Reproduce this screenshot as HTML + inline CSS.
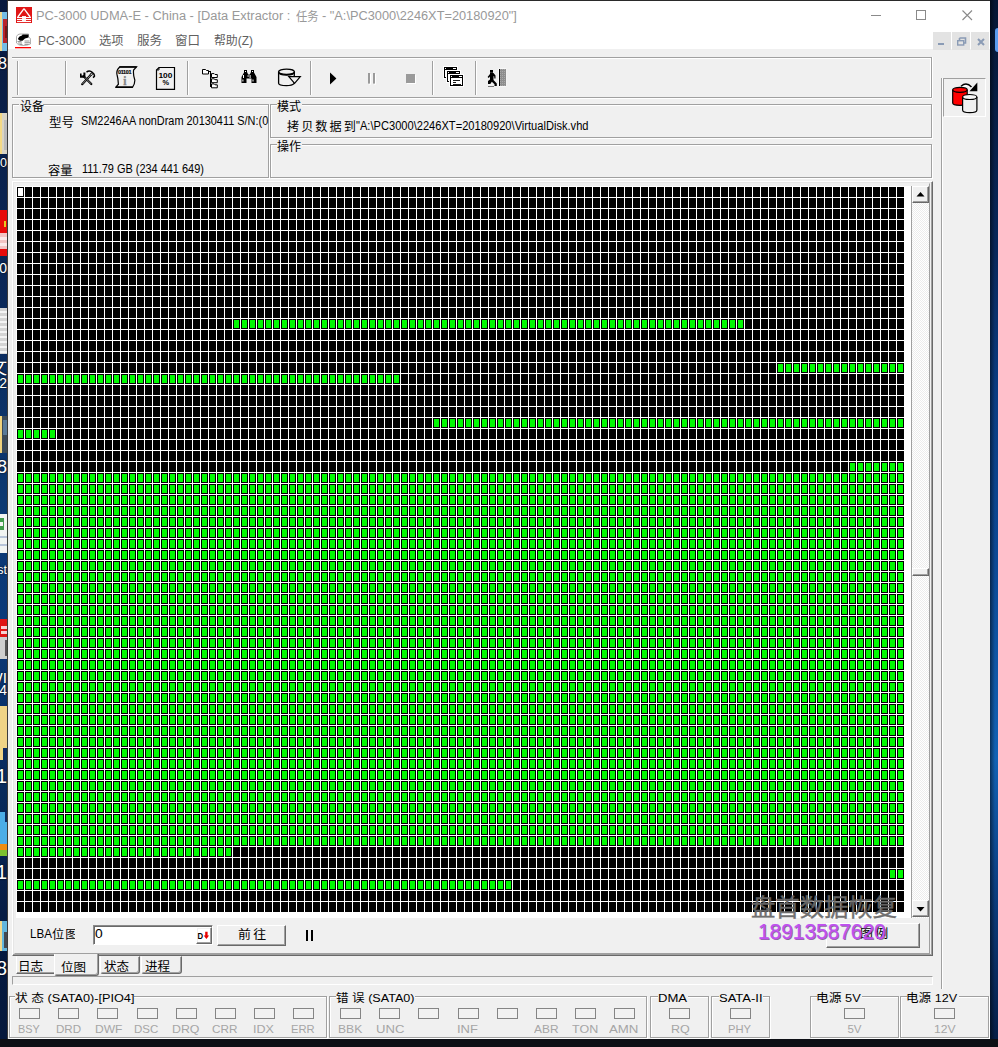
<!DOCTYPE html>
<html lang="zh"><head><meta charset="utf-8"><title>PC-3000 UDMA-E - China</title>
<style>
*{box-sizing:border-box;margin:0;padding:0}
html,body{width:998px;height:1047px;overflow:hidden}
body{position:relative;background:#0a2250;font-family:"Liberation Sans","Noto Sans CJK SC",sans-serif;font-size:12px}
.abs,.t,.ind,.gb,.sep,.ico{position:absolute}
.t{white-space:nowrap;transform-origin:left center;display:block}
#task{left:0;top:1039px;width:998px;height:8px;background:#0d0f15}
#win{left:7px;top:0;width:983px;height:1039px;background:#f0f0f0;border-left:1px solid #3c3c3c;border-top:1px solid #2a2a2a}
#title{left:8px;top:1px;width:982px;height:29px;background:#fff}
#menu{left:8px;top:30px;width:982px;height:19px;background:#fff}
.mdi{top:32px;width:18px;height:18px;background:#e3e3e3}
/* etched box */
.gb{border:1px solid #a0a0a0;box-shadow:inset 1px 1px 0 #fff,1px 1px 0 #fff}
.gbl{position:absolute;background:#f0f0f0;height:3px;top:-1px}
.sep{width:2px;top:61px;height:34px;border-left:1px solid #a0a0a0;border-right:1px solid #fff}
.ind{top:1008px;width:21px;height:11px;border:1px solid #858585;background:#f2f2f2}
.btn{border:1px solid;border-color:#fff #696969 #696969 #fff;box-shadow:inset -1px -1px 0 #a0a0a0,inset 1px 1px 0 #f0f0f0;background:#f0f0f0}
.tab{border:1px solid;border-color:transparent #696969 #696969 #fff;border-radius:0 0 3px 3px;box-shadow:inset -1px -1px 0 #a0a0a0;background:#f0f0f0}
.tab.sel{border-top:0}
.dl{color:#fff;white-space:nowrap;font-family:"Liberation Sans","Noto Sans CJK SC",sans-serif;text-shadow:0 0 2px #000}

</style></head>
<body>
<div class="abs" id="task"></div>
<!-- desktop fragments left -->
<div class="abs" style="left:0;top:0;width:8px;height:1039px;background:linear-gradient(180deg,#08193e 0,#0b2858 28%,#0c3872 48%,#0b3a7a 60%,#082a5c 76%,#061c44 88%,#05183c 100%)"></div>
<div class="abs" style="left:0px;top:12px;width:8px;height:39px;background:#74bde6"></div>
<div class="abs" style="left:0px;top:12px;width:2px;height:39px;background:#f2d98c"></div>
<div class="abs" style="left:3px;top:19px;width:5px;height:24px;background:#b8252b"></div>
<div class="abs" style="left:5px;top:26px;width:3px;height:12px;background:#7a1515"></div>
<span class="abs dl" style="right:991px;top:55px;height:18px;line-height:18px;font-size:16.7px">8</span>
<div class="abs" style="left:0px;top:113px;width:8px;height:41px;background:#d9d4c4"></div>
<div class="abs" style="left:0px;top:113px;width:2px;height:41px;background:#f4d985"></div>
<div class="abs" style="left:4px;top:120px;width:3px;height:30px;background:#b9b9b9"></div>
<span class="abs dl" style="right:991px;top:156px;height:15px;line-height:15px;font-size:12.5px">30</span>
<div class="abs" style="left:0px;top:210px;width:8px;height:46px;background:#e60a0a"></div>
<div class="abs" style="left:4px;top:221px;width:2px;height:6px;background:#e8c820"></div>
<div class="abs" style="left:0px;top:233px;width:8px;height:16px;background:#f3c4c4"></div>
<div class="abs" style="left:0px;top:237px;width:8px;height:3px;background:#fbeaea"></div>
<div class="abs" style="left:0px;top:243px;width:8px;height:3px;background:#fbeaea"></div>
<span class="abs dl" style="right:991px;top:260px;height:16px;line-height:16px;font-size:13.9px">00</span>
<div class="abs" style="left:0px;top:308px;width:8px;height:46px;background:#d4d4d4"></div>
<div class="abs" style="left:0px;top:311px;width:8px;height:2px;background:#f4f4f4"></div>
<div class="abs" style="left:0px;top:316px;width:8px;height:2px;background:#f4f4f4"></div>
<div class="abs" style="left:0px;top:321px;width:8px;height:2px;background:#f4f4f4"></div>
<div class="abs" style="left:0px;top:326px;width:8px;height:2px;background:#f4f4f4"></div>
<div class="abs" style="left:0px;top:331px;width:8px;height:2px;background:#f4f4f4"></div>
<div class="abs" style="left:0px;top:336px;width:8px;height:2px;background:#f4f4f4"></div>
<div class="abs" style="left:0px;top:341px;width:8px;height:2px;background:#f4f4f4"></div>
<div class="abs" style="left:0px;top:346px;width:8px;height:2px;background:#f4f4f4"></div>
<div class="abs" style="left:0px;top:351px;width:8px;height:2px;background:#f4f4f4"></div>
<span class="abs dl" style="right:991px;top:359px;height:19px;line-height:19px;font-size:18.1px">文</span>
<span class="abs dl" style="right:991px;top:375px;height:16px;line-height:16px;font-size:13.9px">(2</span>
<div class="abs" style="left:0px;top:416px;width:8px;height:37px;background:#3c4a58"></div>
<div class="abs" style="left:0px;top:416px;width:2px;height:37px;background:#f0d27c"></div>
<div class="abs" style="left:3px;top:420px;width:5px;height:15px;background:#5a7a98"></div>
<span class="abs dl" style="right:991px;top:458px;height:19px;line-height:19px;font-size:18.1px">8</span>
<div class="abs" style="left:0px;top:514px;width:8px;height:39px;background:#f2f4f2"></div>
<div class="abs" style="left:0px;top:518px;width:4px;height:12px;background:#3f9a4a"></div>
<div class="abs" style="left:0px;top:522px;width:3px;height:4px;background:#f2f4f2"></div>
<div class="abs" style="left:0px;top:536px;width:8px;height:2px;background:#b8c4d8"></div>
<div class="abs" style="left:0px;top:544px;width:8px;height:2px;background:#b8c4d8"></div>
<span class="abs dl" style="right:991px;top:563px;height:15px;line-height:15px;font-size:12.5px">st</span>
<div class="abs" style="left:0px;top:619px;width:8px;height:18px;background:#e01414"></div>
<div class="abs" style="left:1px;top:626px;width:6px;height:3px;background:#f8d0d0"></div>
<div class="abs" style="left:1px;top:631px;width:6px;height:3px;background:#f8d0d0"></div>
<div class="abs" style="left:0px;top:637px;width:8px;height:22px;background:#cfcfcf"></div>
<div class="abs" style="left:5px;top:640px;width:2px;height:16px;background:#555"></div>
<span class="abs dl" style="right:991px;top:669px;height:17px;line-height:17px;font-size:15.3px">WI</span>
<span class="abs dl" style="right:991px;top:682px;height:16px;line-height:16px;font-size:13.9px">54</span>
<div class="abs" style="left:0px;top:706px;width:8px;height:54px;background:#f0d486"></div>
<div class="abs" style="left:3px;top:748px;width:5px;height:12px;background:#0c2c60"></div>
<span class="abs dl" style="right:991px;top:766px;height:20px;line-height:20px;font-size:19.4px">1</span>
<div class="abs" style="left:0px;top:812px;width:8px;height:32px;background:#4cade6"></div>
<div class="abs" style="left:5px;top:812px;width:3px;height:10px;background:#0c2c60"></div>
<div class="abs" style="left:0px;top:844px;width:8px;height:6px;background:#f08c10"></div>
<div class="abs" style="left:0px;top:850px;width:8px;height:6px;background:#7cc030"></div>
<span class="abs dl" style="right:991px;top:862px;height:20px;line-height:20px;font-size:19.4px">1</span>
<div class="abs" style="left:0px;top:921px;width:8px;height:30px;background:#62b6de"></div>
<div class="abs" style="left:0px;top:921px;width:2px;height:30px;background:#f2d98c"></div>
<div class="abs" style="left:4px;top:932px;width:4px;height:16px;background:#444a52"></div>
<span class="abs dl" style="right:991px;top:958px;height:20px;line-height:20px;font-size:19.4px">8</span>
<div class="abs" id="rightfrag" style="left:990px;top:0;width:8px;height:1039px;background:linear-gradient(90deg,rgba(0,0,0,.5),rgba(0,0,0,0) 5px),linear-gradient(180deg,#061634 0,#08275a 24%,#0a3c82 38%,#0c4a96 55%,#1262b4 73%,#0b3f82 85%,#061d46 100%)"></div>
<div class="abs" style="left:995px;top:28px;width:6px;height:24px;border-radius:3px;background:#5b9cf0"></div>
<div class="abs" id="win"></div>
<div class="abs" id="title"></div>
<div class="abs" id="menu"></div>
<!-- title bar controls -->
<svg class="abs" style="left:860px;top:1px" width="130" height="29" viewBox="0 0 130 29" shape-rendering="crispEdges">
<rect x="11" y="14" width="10" height="1" fill="#8a8a8a"/>
<rect x="56.5" y="9.5" width="9" height="9" fill="none" stroke="#8a8a8a" stroke-width="1"/>
<path d="M102.5 9.5 L112 19 M112 9.5 L102.5 19" stroke="#8a8a8a" stroke-width="1.1" fill="none" shape-rendering="auto"/>
</svg>
<div class="abs mdi" style="left:933px"></div><div class="abs mdi" style="left:952px"></div><div class="abs mdi" style="left:971px"></div>
<svg class="abs" style="left:933px;top:32px" width="57" height="18" viewBox="0 0 57 18">
<rect x="5" y="11" width="6" height="2" fill="#8a9bb5"/>
<path d="M26.5 6 h6 v5 h-1.5 M26.5 6 v2" stroke="#8a9bb5" stroke-width="1.6" fill="none"/>
<rect x="24.7" y="8.7" width="6" height="4.3" stroke="#8a9bb5" stroke-width="1.4" fill="none"/>
<path d="M45 7 l6 6 M51 7 l-6 6" stroke="#8a9bb5" stroke-width="2" fill="none"/>
</svg>
<!-- toolbar -->
<div class="abs" style="left:12px;top:57px;width:920px;height:41px;border:1px solid #a0a0a0;border-left:0;box-shadow:inset 0 1px 0 #fff,inset -1px 0 0 #fff, 0 1px 0 #fff,1px 0 0 #fff"></div>
<i class="sep" style="left:17px"></i><i class="sep" style="left:65px"></i><i class="sep" style="left:187px"></i><i class="sep" style="left:310px"></i><i class="sep" style="left:432px"></i><i class="sep" style="left:475px"></i>
<!-- app icon -->
<svg class="abs" style="left:16px;top:7px" width="16" height="16" viewBox="0 0 16 16">
<rect width="16" height="16" fill="#e01616"/>
<path d="M8 1.6 L1.8 10 M8 1.6 L14.2 10" stroke="#fff" stroke-width="1.3" fill="none"/>
<rect x="6" y="9" width="4" height="6" fill="#fbeaea"/>
<rect x="1" y="10" width="14" height="1.1" fill="#fff"/><rect x="1" y="12" width="14" height="1.1" fill="#fff"/><rect x="1" y="14" width="14" height="1.1" fill="#fff"/>
</svg>
<!-- menu icon -->
<svg class="abs" style="left:15px;top:33px" width="17" height="16" viewBox="0 0 17 16">
<path d="M1.5 3.5 Q2.5 1 5 1 L13.5 1 L13.5 4 Q16 5 15.5 7 L15.5 11 Q12 12.5 8 12.5 Q3 12.5 1.5 10 Z" fill="#fff" stroke="#9a9a9a" stroke-width=".8"/>
<path d="M3 5.5 Q4 3 7 2.5 L7.5 1.5 L13.5 1.5 L13.5 4.5 L10 5.5 L7.5 7.8 L5.2 7.8 L3.5 6.8 Z" fill="#000"/>
<path d="M2.5 8.5 h4 M3 10 h4 M4.5 11.5 h3 M9.5 8 h5 M9.5 9.7 h5.5 M9.5 11.4 h4" stroke="#8c8c8c" stroke-width=".9"/>
<rect x="0" y="14" width="16" height="1.3" fill="#f00"/>
</svg>
<!-- tools -->
<svg class="abs" style="left:79px;top:70px" width="17" height="16" viewBox="0 0 17 16">
<path d="M3.2 14.2 L12.2 4.6" stroke="#000" stroke-width="2.2" stroke-linecap="round"/>
<path d="M3.4 14 L12 4.8" stroke="#ddd" stroke-width=".6"/>
<path d="M12.3 14 L4.6 6.2" stroke="#000" stroke-width="2.2" stroke-linecap="round"/>
<path d="M12.1 13.8 L5 6.6" stroke="#ddd" stroke-width=".6"/>
<path d="M1 3.5 h1.6 v2 h1.8 v-3 h2 v5.2 h-5.4 z" fill="#000"/>
<path d="M7.5 2.2 Q10.5 -.2 13.5 2.6 Q15.8 4.5 15.4 6.4 L14 7.6" fill="none" stroke="#000" stroke-width="1.5"/>
<circle cx="12.3" cy="4.3" r="1.1" fill="#f0f0f0" stroke="#000" stroke-width=".8"/>
</svg>
<!-- scroll -->
<svg class="abs" style="left:115px;top:66px" width="23" height="23" viewBox="0 0 23 23">
<path d="M5 .8 L21.5 .8 L18.6 4 Q18 9 19.8 14 Q20 18 17.6 21.2 L.8 21.2 L3.4 18.2 Q3.2 13 2 8.5 Q1 4 5 .8 Z" fill="#f0f0f0" stroke="#000" stroke-width="1.2"/>
<path d="M4.4 .9 H21.6 M.7 21.2 H17.8" stroke="#000" stroke-width="1.5"/>
<text x="3" y="8.100" font-family="Liberation Sans,sans-serif" font-weight="bold" font-size="5.400" textLength="13.400" lengthAdjust="spacing" fill="#000" stroke="#000" stroke-width=".15">01101</text>
<text x="8.300" y="19.400" font-family="Liberation Serif,serif" font-weight="bold" font-size="11.500" fill="#858585" stroke="#858585" stroke-width=".3">i</text>
</svg>
<!-- 100% doc -->
<svg class="abs" style="left:155px;top:66px" width="22" height="25" viewBox="0 0 22 25">
<path d="M4 1.5 H19.5 V23.3 H1.5 V4 Z" fill="#f0f0f0" stroke="#000" stroke-width="1.2"/>
<path d="M1.5 4 H4 V1.5" fill="none" stroke="#000" stroke-width=".9"/>
<text x="3.4" y="11.5" font-family="Liberation Sans,sans-serif" font-weight="bold" font-size="7" textLength="14" lengthAdjust="spacingAndGlyphs" fill="#000">100</text>
<text x="7.6" y="18.9" font-family="Liberation Sans,sans-serif" font-weight="bold" font-size="6.4" textLength="6.6" lengthAdjust="spacingAndGlyphs" fill="#000">%</text>
</svg>
<!-- tree -->
<svg class="abs" style="left:201px;top:68px" width="18" height="21" viewBox="0 0 18 21" shape-rendering="crispEdges">
<path d="M1.5 1.5 h3 l1 1 h2 v3.5 h-6 z" fill="#fff" stroke="#000" stroke-width="1" shape-rendering="auto"/>
<path d="M7.5 3.5 h2 v14.5 h2 M9.5 7.5 h2 M9.5 12.5 h2" fill="none" stroke="#000" stroke-width="1.2"/>
<path d="M10.5 5.6 h2.6 l.9 .9 h2.3 v3 h-5.8 z" fill="#fff" stroke="#000" stroke-width="1" shape-rendering="auto"/>
<path d="M10.5 10.8 h2.6 l.9 .9 h2.3 v3 h-5.8 z" fill="#fff" stroke="#000" stroke-width="1" shape-rendering="auto"/>
<path d="M10.5 15.9 h2.6 l.9 .9 h2.3 v3 h-5.8 z" fill="#fff" stroke="#000" stroke-width="1" shape-rendering="auto"/>
</svg>
<!-- binoculars -->
<svg class="abs" style="left:240px;top:69px" width="18" height="15" viewBox="0 0 18 15">
<path d="M4 1 h3 v2 l1.2 2.5 h1.600 L11 3 v-2 h3 v2.400 L16.500 8 v6 h-5 v-4.500 h-5 v4.500 h-5 v-6 L4 3.400 z" fill="#000"/>
<rect x="5" y="2" width="1" height="1" fill="#fff"/><rect x="12" y="2" width="1" height="1" fill="#fff"/>
<rect x="3" y="6" width="1" height="3" fill="#fff"/><rect x="7.6" y="6" width="1" height="2" fill="#ccc"/><rect x="9.600" y="6" width="1" height="3" fill="#fff"/>
<rect x="2.400" y="10.500" width="1" height="2" fill="#fff"/><rect x="12.500" y="10.500" width="1" height="2" fill="#fff"/>
</svg>
<!-- cylinder + funnel -->
<svg class="abs" style="left:277px;top:68px" width="25" height="20" viewBox="0 0 25 20">
<path d="M1.600 3.800 V15.200 Q1.600 17.600 9.500 17.600 Q15 17.600 17 15.600 L17.400 3.800" fill="none" stroke="#000" stroke-width="1.300"/>
<ellipse cx="9.500" cy="3.800" rx="7.900" ry="2.700" fill="none" stroke="#000" stroke-width="1.300"/>
<path d="M1.600 4.500 Q2.500 7 9.500 7 Q16.500 7 17.400 4.500" fill="none" stroke="#000" stroke-width="1.300"/>
<path d="M11.800 8.700 H23.300 L17.600 15.300 Z" fill="#f0f0f0" stroke="#000" stroke-width="1.200"/>
</svg>
<!-- play / pause / stop -->
<svg class="abs" style="left:329px;top:72px" width="90" height="14" viewBox="0 0 90 14">
<path d="M1 .6 L7.400 6.500 L1 12.400 Z" fill="#000"/>
<rect x="40" y="2" width="2" height="10.600" fill="#fff"/><rect x="45" y="2" width="2" height="10.600" fill="#fff"/>
<rect x="39" y="1" width="2" height="10.600" fill="#9a9a9a"/><rect x="44" y="1" width="2" height="10.600" fill="#9a9a9a"/>
<rect x="78" y="3" width="9" height="9" fill="#fff"/>
<rect x="77" y="2" width="9" height="9" fill="#9a9a9a"/>
</svg>
<!-- cascade windows -->
<svg class="abs" style="left:443px;top:66px" width="22" height="22" viewBox="0 0 22 22" shape-rendering="crispEdges">
<g id="wn"><rect x="0" y="0" width="15" height="13" fill="#fff"/><rect x="1.500" y="1.500" width="12" height="10.400" fill="#fff" stroke="#000" stroke-width="1"/><rect x="1" y="1" width="13" height="2.600" fill="#000"/><rect x="2" y="1.800" width="1" height="1" fill="#fff"/><rect x="10" y="1.800" width="2.500" height="1" fill="#fff"/></g>
<use href="#wn" x="3" y="4"/><use href="#wn" x="6" y="8"/>
<path d="M9.500 14.500 h7 M9.500 16.300 h3 M9.500 18 h8" stroke="#000" stroke-width=".9"/>
</svg>
<!-- walking man + door -->
<svg class="abs" style="left:487px;top:68px" width="21" height="20" viewBox="0 0 21 20">
<rect x="11.300" y=".5" width="8" height="18" fill="#fff"/>
<rect x="12" y="1" width="7" height="17" fill="#8e8e8e"/>
<path d="M13.500 1 v17 M15.500 1 v17 M17.500 1 v17" stroke="#b5b5b5" stroke-width=".7" stroke-dasharray="1 1"/>
<rect x="12" y="1" width="1" height="17" fill="#000"/>
<path d="M3 2 h3 v2.800 h-3 z" fill="#000"/>
<path d="M3 5 L6.500 5 L8.500 7.500 L8.500 10.500 L7.300 10.500 L7.300 8.500 L6.500 8 L6.500 12 L9.800 15.500 L9.800 18 L7.500 18 L7.500 16.300 L4.800 13.800 L3.300 16 L1 16 L1 13 L3 11.500 L3 8.600 L1.800 10 L.600 9 L3 6 Z" fill="#000"/>
<path d="M1.500 18.500 h1 M3.500 18.500 h1 M5.500 18.500 h1" stroke="#000" stroke-width="1"/>
</svg>
<!-- copy disk icon -->
<svg class="abs" style="left:950px;top:81px" width="30" height="34" viewBox="0 0 30 34">
<path d="M11 5.800 Q16.500 .5 22 6.500" fill="none" stroke="#fff" stroke-width="1.600" transform="translate(.8,1.300)"/>
<path d="M11 5.200 Q16.500 .4 21.500 6" fill="none" stroke="#000" stroke-width="1.400"/>
<path d="M27.300 1.600 V10.200 H19.500 Z" fill="#000"/>
<path d="M2.700 8.800 V22 Q2.700 24.300 10 24.300 Q17.200 24.300 17.200 22 V8.800" fill="#f00" stroke="#000" stroke-width="1.200"/>
<ellipse cx="9.950" cy="8.800" rx="7.250" ry="2.500" fill="#f00" stroke="#000" stroke-width="1.200"/>
<path d="M12.600 16 V29 Q12.600 31.600 19.800 31.600 Q26.900 31.600 26.900 29 V16" fill="#f0f0f0" stroke="#000" stroke-width="1.200"/>
<ellipse cx="19.750" cy="16" rx="7.150" ry="2.500" fill="#f6f6f6" stroke="#000" stroke-width="1.200"/>
</svg>

<!-- right panel -->
<div class="abs" style="left:941px;top:78px;width:2px;height:911px;border-left:1px solid #a0a0a0;border-right:1px solid #fff"></div>
<div class="abs" style="left:943px;top:78px;width:43px;height:39px;border:1px solid;border-color:#a0a0a0 #fff #fff #a0a0a0"></div>
<!-- group boxes -->
<div class="gb" style="left:12px;top:104px;width:257px;height:74px"><b class="gbl" style="left:6px;width:24px"></b></div>
<div class="gb" style="left:270px;top:104px;width:662px;height:34px"><b class="gbl" style="left:6px;width:25px"></b></div>
<div class="gb" style="left:270px;top:144px;width:662px;height:34px"><b class="gbl" style="left:6px;width:25px"></b></div>
<!-- bitmap panel -->
<div class="abs" id="bp" style="left:12px;top:181px;width:921px;height:775px;border:1px solid;border-color:#fff #696969 #696969 #fff;box-shadow:inset -1px -1px 0 #a0a0a0,inset 1px 1px 0 #e6e6e6"></div>
<div class="abs" style="left:14px;top:183px;width:916px;height:771px;border:1px solid;border-color:transparent #a0a0a0 #a0a0a0 transparent"></div>
<!-- scrollbar -->
<div class="abs" id="sb" style="left:911px;top:186px;width:18px;height:732px;border-left:1px solid #a0a0a0;background:repeating-conic-gradient(#fff 0 25%,#ececec 0 50%) 0 0/2px 2px"></div>
<div class="abs btn" style="left:912px;top:186px;width:17px;height:17px"></div>
<div class="abs btn" style="left:912px;top:900px;width:17px;height:17px"></div>
<div class="abs btn" style="left:912px;top:568px;width:17px;height:8px"></div>
<svg class="abs" style="left:912px;top:186px" width="17" height="17"><path d="M4.5 10.5 L8.5 6 L12.5 10.5 Z" fill="#000"/></svg>
<svg class="abs" style="left:912px;top:900px" width="17" height="17"><path d="M4.5 7 L12.5 7 L8.5 11.5 Z" fill="#000"/></svg>
<!-- LBA row -->
<div class="abs" style="left:93px;top:925px;width:120px;height:20px;background:#fff;border:1px solid;border-color:#8a8a8a #fff #fff #8a8a8a;box-shadow:inset 1px 1px 0 #696969"></div>
<div class="abs btn" style="left:196px;top:927px;width:16px;height:17px;background:#fff"></div>
<svg class="abs" style="left:195px;top:926px" width="17" height="16" viewBox="0 0 17 16"><text x="2.600" y="12.800" font-family="Liberation Sans,sans-serif" font-weight="bold" font-size="9.800" textLength="5.600" lengthAdjust="spacingAndGlyphs" fill="#000">D</text><path d="M10.200 5.700 h2.400 v3.800 h1.500 l-2.700 3.500 l-2.700 -3.500 h1.500 z" fill="#e80000"/></svg>
<div class="abs btn" style="left:217px;top:925px;width:69px;height:21px"></div>
<div class="abs btn" style="left:826px;top:923px;width:94px;height:25px"></div>
<div class="abs" style="left:306px;top:930px;width:2px;height:11px;background:#000"></div>
<div class="abs" style="left:311px;top:930px;width:2px;height:11px;background:#000"></div>
<!-- tabs -->
<div class="abs tab" style="left:16px;top:956px;width:38px;height:18px;border-right:0;border-radius:0;box-shadow:inset 0 -1px 0 #a0a0a0"></div>
<div class="abs tab" style="left:100px;top:956px;width:40px;height:18px"></div>
<div class="abs tab" style="left:141px;top:956px;width:41px;height:18px"></div>
<div class="abs tab sel" style="left:54px;top:954px;width:45px;height:22px"></div>
<!-- sunken strip -->
<div class="abs" style="left:12px;top:976px;width:921px;height:9px;border:1px solid;border-color:#a0a0a0 #fff #fff #a0a0a0"></div>
<!-- status groupboxes -->
<div class="gb" style="left:9px;top:996px;width:318px;height:42px"><b class="gbl" style="left:5px;width:119px"></b></div>
<div class="gb" style="left:329px;top:996px;width:318px;height:42px"><b class="gbl" style="left:6px;width:79px"></b></div>
<div class="gb" style="left:650px;top:996px;width:59px;height:42px"><b class="gbl" style="left:7px;width:30px"></b></div>
<div class="gb" style="left:711px;top:996px;width:59px;height:42px"><b class="gbl" style="left:7px;width:44px"></b></div>
<div class="gb" style="left:810px;top:996px;width:89px;height:42px"><b class="gbl" style="left:6px;width:45px"></b></div>
<div class="gb" style="left:900px;top:996px;width:89px;height:42px"><b class="gbl" style="left:6px;width:52px"></b></div>

<!--MAINEND-->
<svg id="grid" width="895" height="732" viewBox="0 0 895 732" shape-rendering="crispEdges" style="position:absolute;left:16px;top:186px;background:#fff">
<defs><pattern id="pb" x="1" y="1" width="8" height="11" patternUnits="userSpaceOnUse"><rect width="7" height="10" fill="#000"/></pattern>
<pattern id="pg" x="1" y="1" width="8" height="11" patternUnits="userSpaceOnUse"><rect width="7" height="10" fill="#000"/><rect x="1" y="1" width="5" height="8" fill="#00fa00"/></pattern></defs>
<rect x="1" y="1" width="888" height="726" fill="url(#pb)"/>
<rect x="1" y="287" width="888" height="374" fill="url(#pg)"/>
<rect x="217" y="133" width="512" height="11" fill="url(#pg)"/>
<rect x="761" y="177" width="128" height="11" fill="url(#pg)"/>
<rect x="1" y="188" width="384" height="11" fill="url(#pg)"/>
<rect x="417" y="232" width="472" height="11" fill="url(#pg)"/>
<rect x="1" y="243" width="40" height="11" fill="url(#pg)"/>
<rect x="833" y="276" width="56" height="11" fill="url(#pg)"/>
<rect x="1" y="661" width="216" height="11" fill="url(#pg)"/>
<rect x="873" y="683" width="16" height="11" fill="url(#pg)"/>
<rect x="1" y="694" width="496" height="11" fill="url(#pg)"/>
<rect x="2" y="2" width="5" height="8" fill="#fff"/>
</svg>
<i class="ind" style="left:19px"></i>
<i class="ind" style="left:58px"></i>
<i class="ind" style="left:97px"></i>
<i class="ind" style="left:137px"></i>
<i class="ind" style="left:176px"></i>
<i class="ind" style="left:215px"></i>
<i class="ind" style="left:254px"></i>
<i class="ind" style="left:293px"></i>
<i class="ind" style="left:340px"></i>
<i class="ind" style="left:379px"></i>
<i class="ind" style="left:418px"></i>
<i class="ind" style="left:458px"></i>
<i class="ind" style="left:497px"></i>
<i class="ind" style="left:536px"></i>
<i class="ind" style="left:575px"></i>
<i class="ind" style="left:614px"></i>
<i class="ind" style="left:669px"></i>
<i class="ind" style="left:730px"></i>
<i class="ind" style="left:844px"></i>
<i class="ind" style="left:934px"></i>
<span class="t" id="t_title" style="left:36.36px;top:6px;height:20px;line-height:20px;font-size:12.5px;color:#999;transform:scaleX(1.0286);">PC-3000 UDMA-E - China - [Data Extractor :</span>
<span class="t" id="t_title2" style="left:296.11px;top:7px;height:20px;line-height:20px;font-size:12px;color:#999;transform:scaleX(0.9401);">任务</span>
<span class="t" id="t_title3" style="left:322.19px;top:6px;height:20px;line-height:20px;font-size:12.5px;color:#999;transform:scaleX(1.0222);">- &quot;A:\PC3000\2246XT=20180920&quot;]</span>
<span class="t" id="m1" style="left:37.92px;top:31px;height:20px;line-height:20px;font-size:12.5px;color:#646464;transform:scaleX(0.9667);">PC-3000</span>
<span class="t" id="m2" style="left:98.95px;top:31px;height:20px;line-height:20px;font-size:12px;color:#606060;transform:scaleX(1.0194);">选项</span>
<span class="t" id="m3" style="left:136.95px;top:31px;height:20px;line-height:20px;font-size:12px;color:#606060;transform:scaleX(1.0455);">服务</span>
<span class="t" id="m4" style="left:174.95px;top:31px;height:20px;line-height:20px;font-size:12px;color:#606060;transform:scaleX(1.0455);">窗口</span>
<span class="t" id="m5" style="left:213.6px;top:31px;height:20px;line-height:20px;font-size:12px;color:#606060;transform:scaleX(0.9895);">帮助(Z)</span>
<span class="t" id="g1" style="left:19.52px;top:100px;height:15px;line-height:15px;font-size:12px;color:#000;transform:scaleX(1.0021);">设备</span>
<span class="t" id="g2" style="left:277.0px;top:100px;height:15px;line-height:15px;font-size:12px;color:#000;transform:scaleX(1.0000);">模式</span>
<span class="t" id="g3" style="left:276.95px;top:140px;height:15px;line-height:15px;font-size:12px;color:#000;transform:scaleX(1.0019);">操作</span>
<span class="t" id="d1" style="left:48.65px;top:116px;height:15px;line-height:15px;font-size:12px;color:#000;transform:scaleX(1.0455);">型号</span>
<span class="t" id="d2" style="left:81.28px;top:114px;height:15px;line-height:15px;font-size:12.5px;color:#000;transform:scaleX(0.8729);">SM2246AA nonDram 20130411 S/N:(0</span>
<span class="t" id="d3" style="left:48.33px;top:164px;height:15px;line-height:15px;font-size:12px;color:#000;transform:scaleX(1.0194);">容量</span>
<span class="t" id="d4" style="left:81.85px;top:162px;height:15px;line-height:15px;font-size:12.5px;color:#000;transform:scaleX(0.8754);">111.79 GB (234 441 649)</span>
<span class="t" id="mo1" style="left:286.8px;top:120px;height:15px;line-height:15px;font-size:12px;color:#000;transform:scaleX(1.0120);letter-spacing:2px;">拷贝数据到</span>
<span class="t" id="mo2" style="left:356.11px;top:119px;height:15px;line-height:15px;font-size:12.5px;color:#000;transform:scaleX(0.8885);">&quot;A:\PC3000\2246XT=20180920\VirtualDisk.vhd</span>
<span class="t" id="l1" style="left:30.04px;top:927px;height:15px;line-height:15px;font-size:12.5px;color:#000;transform:scaleX(0.9286);">LBA</span>
<span class="t" id="l1b" style="left:51.8px;top:928px;height:15px;line-height:15px;font-size:12px;color:#000;transform:scaleX(1.0262);letter-spacing:1px;">位图</span>
<span class="t" id="l2" style="left:94.86px;top:927px;height:15px;line-height:15px;font-size:12.5px;color:#000;transform:scaleX(1.1025);">0</span>
<span class="t" id="l3" style="left:238.47px;top:928px;height:15px;line-height:15px;font-size:12px;color:#000;transform:scaleX(1.0804);letter-spacing:2px;">前往</span>
<span class="t" id="l4" style="left:859.9px;top:927px;height:15px;line-height:15px;font-size:12px;color:#000;transform:scaleX(1.0837);letter-spacing:2px;">图例</span>
<span class="t" id="tb1" style="left:18.32px;top:960px;height:15px;line-height:15px;font-size:12px;color:#000;transform:scaleX(1.0481);">日志</span>
<span class="t" id="tb2" style="left:60.95px;top:961px;height:15px;line-height:15px;font-size:12px;color:#000;transform:scaleX(1.0455);">位图</span>
<span class="t" id="tb3" style="left:103.5px;top:960px;height:15px;line-height:15px;font-size:12px;color:#000;transform:scaleX(1.0455);">状态</span>
<span class="t" id="tb4" style="left:144.98px;top:960px;height:15px;line-height:15px;font-size:12px;color:#000;transform:scaleX(1.0440);">进程</span>
<span class="t" id="s1" style="left:15.08px;top:989px;height:18px;line-height:18px;font-size:11.7px;color:#000;transform:scaleX(1.0864);">状 态 (SATA0)-[PIO4]</span>
<span class="t" id="s2" style="left:335.92px;top:989px;height:18px;line-height:18px;font-size:11.7px;color:#000;transform:scaleX(1.0761);">错 误 (SATA0)</span>
<span class="t" id="s3" style="left:657.75px;top:989px;height:18px;line-height:18px;font-size:11.7px;color:#000;transform:scaleX(1.1200);">DMA</span>
<span class="t" id="s4" style="left:718.76px;top:989px;height:18px;line-height:18px;font-size:11.7px;color:#000;transform:scaleX(1.1108);">SATA-II</span>
<span class="t" id="s5" style="left:816.45px;top:989px;height:18px;line-height:18px;font-size:11.7px;color:#000;transform:scaleX(1.0924);">电源 5V</span>
<span class="t" id="s6" style="left:906.43px;top:989px;height:18px;line-height:18px;font-size:11.7px;color:#000;transform:scaleX(1.0758);">电源 12V</span>
<span class="t" id="a0" style="left:18.37px;top:1019.6px;height:18px;line-height:18px;font-size:11.5px;color:#a6a6a6;transform:scaleX(0.9458);">BSY</span>
<span class="t" id="a1" style="left:55.6px;top:1019.6px;height:18px;line-height:18px;font-size:11.5px;color:#a6a6a6;transform:scaleX(1.0084);">DRD</span>
<span class="t" id="a2" style="left:94.58px;top:1019.6px;height:18px;line-height:18px;font-size:11.5px;color:#a6a6a6;transform:scaleX(1.0486);">DWF</span>
<span class="t" id="a3" style="left:133.65px;top:1019.6px;height:18px;line-height:18px;font-size:11.5px;color:#a6a6a6;transform:scaleX(1.0019);">DSC</span>
<span class="t" id="a4" style="left:172.23px;top:1019.6px;height:18px;line-height:18px;font-size:11.5px;color:#a6a6a6;transform:scaleX(1.0750);">DRQ</span>
<span class="t" id="a5" style="left:211.81px;top:1019.6px;height:18px;line-height:18px;font-size:11.5px;color:#a6a6a6;transform:scaleX(1.0194);">CRR</span>
<span class="t" id="a6" style="left:252.93px;top:1019.6px;height:18px;line-height:18px;font-size:11.5px;color:#a6a6a6;transform:scaleX(1.0892);">IDX</span>
<span class="t" id="a7" style="left:291.06px;top:1019.6px;height:18px;line-height:18px;font-size:11.5px;color:#a6a6a6;transform:scaleX(0.9749);">ERR</span>
<span class="t" id="b0" style="left:337.64px;top:1019.6px;height:18px;line-height:18px;font-size:11.5px;color:#a6a6a6;transform:scaleX(1.0546);">BBK</span>
<span class="t" id="b1" style="left:376.24px;top:1019.6px;height:18px;line-height:18px;font-size:11.5px;color:#a6a6a6;transform:scaleX(1.1391);">UNC</span>
<span class="t" id="b3" style="left:457.25px;top:1019.6px;height:18px;line-height:18px;font-size:11.5px;color:#a6a6a6;transform:scaleX(1.1294);">INF</span>
<span class="t" id="b5" style="left:533.6px;top:1019.6px;height:18px;line-height:18px;font-size:11.5px;color:#a6a6a6;transform:scaleX(1.0351);">ABR</span>
<span class="t" id="b6" style="left:571.69px;top:1019.6px;height:18px;line-height:18px;font-size:11.5px;color:#a6a6a6;transform:scaleX(1.0874);">TON</span>
<span class="t" id="b7" style="left:608.63px;top:1019.6px;height:18px;line-height:18px;font-size:11.5px;color:#a6a6a6;transform:scaleX(1.1520);">AMN</span>
<span class="t" id="c1" style="left:670.77px;top:1019.6px;height:18px;line-height:18px;font-size:11.5px;color:#a6a6a6;transform:scaleX(1.0876);">RQ</span>
<span class="t" id="c2" style="left:728.42px;top:1019.6px;height:18px;line-height:18px;font-size:11.5px;color:#a6a6a6;transform:scaleX(0.9729);">PHY</span>
<span class="t" id="c3" style="left:847.4px;top:1019.6px;height:18px;line-height:18px;font-size:11.5px;color:#a6a6a6;transform:scaleX(1.0000);">5V</span>
<span class="t" id="c4" style="left:933.58px;top:1019.6px;height:18px;line-height:18px;font-size:11.5px;color:#a6a6a6;transform:scaleX(1.0550);">12V</span>
<span class="t" id="w1" style="left:750.99px;top:893px;height:30px;line-height:30px;font-size:24px;color:#686868;transform:scaleX(1.0141);-webkit-text-stroke:.45px #686868;opacity:.94;">盘首数据恢复</span>
<span class="t" id="w2" style="left:757.85px;top:920px;height:24px;line-height:24px;font-size:21.5px;color:#c050f0;transform:scaleX(0.9708);-webkit-text-stroke:.25px #c050f0;text-shadow:1px 1px 0 rgba(70,10,100,.6);">18913587620</span>
<div class="abs" id="lbaclip" style="left:75px;top:926px;width:4px;height:16px;background:#f0f0f0"></div>

</body></html>
